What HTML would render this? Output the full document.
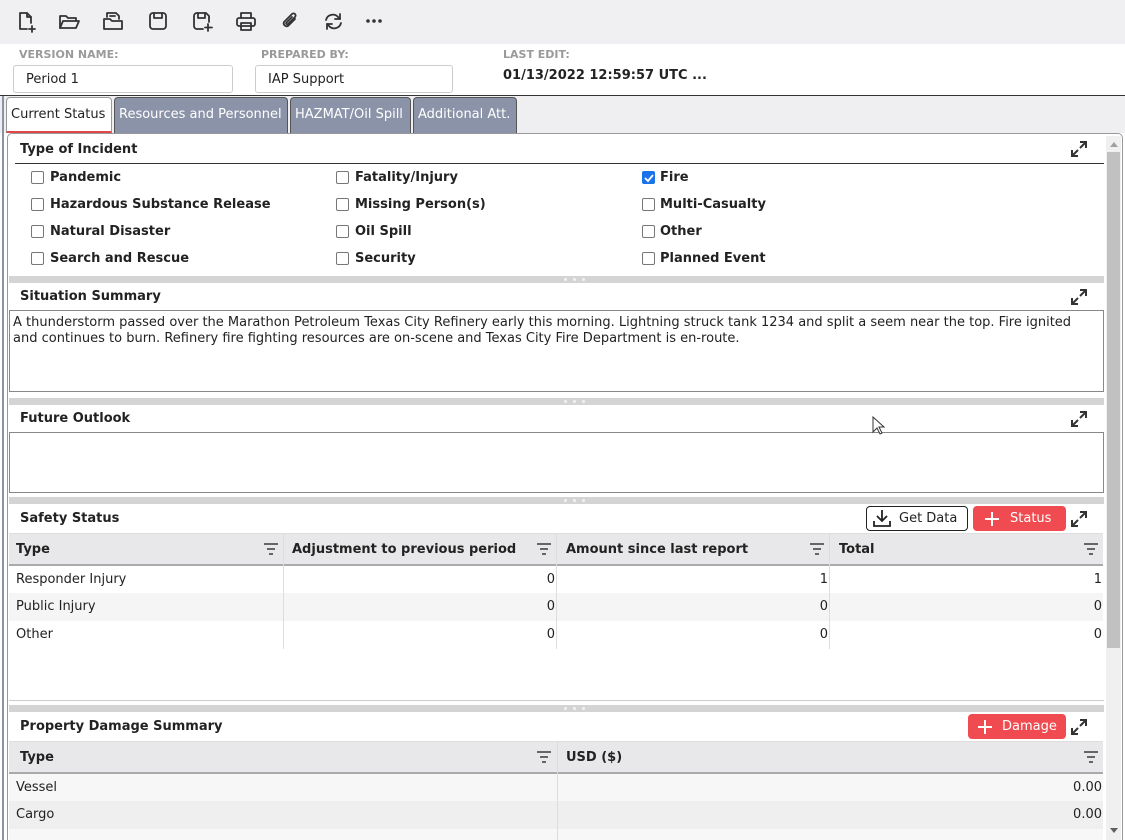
<!DOCTYPE html>
<html><head><meta charset="utf-8">
<style>
*{box-sizing:border-box;margin:0;padding:0}
html,body{width:1125px;height:840px;overflow:hidden}
body{background:#fff;font-family:"DejaVu Sans","Liberation Sans",sans-serif;font-size:13px;color:#222;position:relative}
.a{position:absolute}
.b{font-weight:bold}
.tb{left:0;top:0;width:1125px;height:44px;background:#f0f0f2}
.lbl{font-size:11px;font-weight:bold;color:#9a9a9a;top:48px}
.inp{top:65px;height:28px;border:1px solid #ccc;border-radius:3px;padding:6px 0 0 12px;font-size:13px}
.tab{top:97px;height:36px;background:#8b93a8;color:#fff;border:1px solid #555;border-bottom:none;border-radius:4px 4px 0 0;padding:9px 0 0 4px;font-size:13px;white-space:nowrap}
.sep{left:9px;width:1095px;height:7px;background:#d4d4d4}
.sep i{position:absolute;left:555px;top:2px;width:3px;height:3px;border-radius:50%;background:#f2f2f2}
.ttl{left:20px;font-weight:bold;font-size:13px}
.cb{width:13px;height:13px;border:1px solid #777;border-radius:2px;background:#fff}
.cl{font-weight:bold;font-size:13px}
.ta{left:9px;width:1095px;border:1px solid #888;background:#fff;padding:4px 3px;font-size:13px;line-height:16px;white-space:nowrap}
.th{height:33px;background:#e8e8ea;border-bottom:2px solid #aaa}
.tc{font-weight:bold;padding-top:9px}
.row{left:9px;width:1094px;height:28px}
.cell{font-size:13px}
.r{text-align:right;width:60px}
.btnr{background:#f04b50;color:#fff;border-radius:4px;height:25px;font-size:13px}
.flt{width:14px;height:12px}
</style></head><body>
<div class="a tb"></div>
<svg class="a" style="left:12px;top:8px" width="380" height="26" fill="none" stroke="#333" stroke-width="1.8" stroke-linecap="round" stroke-linejoin="round">
 <g transform="translate(5,4)"><path d="M10 17H3V1h7l4 4v6"/><path d="M10 1v4h4"/><path d="M15 14v6M12 17h6"/></g>
 <g transform="translate(47,5)"><path d="M1 15V3h6l2 2h8v3"/><path d="M1 15l3-7h16l-3 7z"/></g>
 <g transform="translate(91,3)"><path d="M4 6V2h9l3 3v3"/><path d="M1 18V8h6l2 2h10v8z"/><path d="M7 5h5"/></g>
 <g transform="translate(137,4)"><rect x="1" y="1" width="16" height="16" rx="3"/><path d="M5 1v5h8V1"/></g>
 <g transform="translate(181,4)"><path d="M10 17H4a3 3 0 0 1-3-3V4a3 3 0 0 1 3-3h9l3 3v6"/><path d="M5 1v5h7V1"/><path d="M15 12v7M12 15.5h7"/></g>
 <g transform="translate(224,4)"><path d="M5 6V1h10v5"/><rect x="1" y="6" width="18" height="8" rx="2"/><path d="M5 11h10v7H5z"/></g>
 <g transform="translate(268,3)"><path d="M15 8l-7 7a3 3 0 0 1-4-4l8-8a2 2 0 0 1 3 3l-7 7a1 1 0 0 1-1.5-1.5L12 6"/></g>
 <g transform="translate(311,4)"><path d="M3 8a7 7 0 0 1 12-3l2 2"/><path d="M17 2v5h-5"/><path d="M18 11a7 7 0 0 1-12 3l-2-2"/><path d="M4 17v-5h5"/></g>
 <g fill="#333" stroke="none"><circle cx="356" cy="13" r="1.8"/><circle cx="362" cy="13" r="1.8"/><circle cx="368" cy="13" r="1.8"/></g>
</svg>
<div class="a lbl" style="left:19px">VERSION NAME:</div>
<div class="a lbl" style="left:261px">PREPARED BY:</div>
<div class="a lbl" style="left:503px">LAST EDIT:</div>
<div class="a inp" style="left:13px;width:220px">Period 1</div>
<div class="a inp" style="left:255px;width:198px">IAP Support</div>
<div class="a b" style="left:503px;top:68px">01/13/2022 12:59:57 UTC ...</div>
<div class="a" style="left:0;top:95px;width:1125px;height:1px;background:#333"></div>
<div class="a" style="left:0;top:96px;width:1125px;height:37px;background:#efeff1"></div>
<div class="a" style="left:2px;top:96px;width:2px;height:744px;background:#8b93a8"></div>
<div class="a tab" style="left:6px;width:106px;background:#fff;color:#222;border-color:#999;border-bottom:2px solid #e04848">Current Status</div>
<div class="a tab" style="left:114px;width:174px">Resources and Personnel</div>
<div class="a tab" style="left:290px;width:121px">HAZMAT/Oil Spill</div>
<div class="a tab" style="left:413px;width:104px">Additional Att.</div>
<div class="a" style="left:7px;top:133px;width:1116px;height:707px;border:1px solid #999;border-bottom:none;border-radius:5px 5px 0 0;background:#fff"></div>
<div class="a" style="left:1106px;top:136px;width:15px;height:704px;background:#f0f0f0"></div>
<div class="a" style="left:1107px;top:152px;width:13px;height:496px;background:#c1c1c1"></div>
<div class="a" style="left:1110px;top:142px;width:0;height:0;border:4px solid transparent;border-bottom:5px solid #a0a0a0;border-top:none"></div>
<div class="a" style="left:1110px;top:828px;width:0;height:0;border:4px solid transparent;border-top:5px solid #606060;border-bottom:none"></div>

<svg width="0" height="0" style="position:absolute"><defs><g id="ex" fill="none" stroke="#333" stroke-width="2"><path d="M10 2h6v6M16 2l-6 6M8 16H2v-6M2 16l6-6"/></g>
<g id="fl" fill="none" stroke="#666" stroke-width="2"><path d="M0 1h14M3 6h8M5 11h4"/></g></defs></svg>

<div class="a ttl" style="top:142px">Type of Incident</div>
<svg class="a" style="left:1070px;top:140px" width="18" height="18"><use href="#ex"/></svg>
<div class="a" style="left:15px;top:163px;width:1089px;height:1px;background:#333"></div>
<div class="a cb" style="left:31px;top:171px"></div><div class="a cl" style="left:50px;top:170px">Pandemic</div>
<div class="a cb" style="left:31px;top:198px"></div><div class="a cl" style="left:50px;top:197px">Hazardous Substance Release</div>
<div class="a cb" style="left:31px;top:225px"></div><div class="a cl" style="left:50px;top:224px">Natural Disaster</div>
<div class="a cb" style="left:31px;top:252px"></div><div class="a cl" style="left:50px;top:251px">Search and Rescue</div>
<div class="a cb" style="left:336px;top:171px"></div><div class="a cl" style="left:355px;top:170px">Fatality/Injury</div>
<div class="a cb" style="left:336px;top:198px"></div><div class="a cl" style="left:355px;top:197px">Missing Person(s)</div>
<div class="a cb" style="left:336px;top:225px"></div><div class="a cl" style="left:355px;top:224px">Oil Spill</div>
<div class="a cb" style="left:336px;top:252px"></div><div class="a cl" style="left:355px;top:251px">Security</div>
<div class="a cb" style="left:642px;top:171px;background:#1a73e8;border-color:#1a73e8"><svg width="11" height="11" style="position:absolute;left:0;top:0"><path d="M2 6l3 3 5-6" fill="none" stroke="#fff" stroke-width="1.8"/></svg></div><div class="a cl" style="left:660px;top:170px">Fire</div>
<div class="a cb" style="left:642px;top:198px"></div><div class="a cl" style="left:660px;top:197px">Multi-Casualty</div>
<div class="a cb" style="left:642px;top:225px"></div><div class="a cl" style="left:660px;top:224px">Other</div>
<div class="a cb" style="left:642px;top:252px"></div><div class="a cl" style="left:660px;top:251px">Planned Event</div>

<div class="a sep" style="top:276px"><i></i><i style="left:564px"></i><i style="left:573px"></i></div>
<div class="a ttl" style="top:289px">Situation Summary</div>
<svg class="a" style="left:1070px;top:288px" width="18" height="18"><use href="#ex"/></svg>
<div class="a ta" style="top:310px;height:82px">A thunderstorm passed over the Marathon Petroleum Texas City Refinery early this morning. Lightning struck tank 1234 and split a seem near the top. Fire ignited<br>and continues to burn. Refinery fire fighting resources are on-scene and Texas City Fire Department is en-route.</div>

<div class="a sep" style="top:398px"><i></i><i style="left:564px"></i><i style="left:573px"></i></div>
<div class="a ttl" style="top:411px">Future Outlook</div>
<svg class="a" style="left:1070px;top:410px" width="18" height="18"><use href="#ex"/></svg>
<div class="a ta" style="top:432px;height:61px"></div>

<div class="a sep" style="top:497px"><i></i><i style="left:564px"></i><i style="left:573px"></i></div>
<div class="a ttl" style="top:511px">Safety Status</div>
<div class="a" style="left:866px;top:506px;width:102px;height:25px;border:1px solid #222;border-radius:4px;background:#fff"></div>
<svg class="a" style="left:873px;top:509px" width="18" height="18" fill="none" stroke="#222" stroke-width="1.8"><path d="M9 1v11M4 7l5 5 5-5M1 12v5h16v-5"/></svg>
<div class="a" style="left:899px;top:511px">Get Data</div>
<div class="a btnr" style="left:973px;top:506px;width:93px"></div>
<svg class="a" style="left:984px;top:511px" width="16" height="16" stroke="#fff" stroke-width="2"><path d="M8 1v14M1 8h14"/></svg>
<div class="a" style="left:1010px;top:511px;color:#fff">Status</div>
<svg class="a" style="left:1070px;top:510px" width="18" height="18"><use href="#ex"/></svg>

<div class="a th" style="left:9px;top:533px;width:1094px;border-top:1px solid #ddd"></div>
<div class="a tc" style="left:16px;top:533px">Type</div>
<div class="a tc" style="left:292px;top:533px">Adjustment to previous period</div>
<div class="a tc" style="left:566px;top:533px">Amount since last report</div>
<div class="a tc" style="left:839px;top:533px">Total</div>
<svg class="a flt" style="left:264px;top:543px"><use href="#fl"/></svg>
<svg class="a flt" style="left:537px;top:543px"><use href="#fl"/></svg>
<svg class="a flt" style="left:810px;top:543px"><use href="#fl"/></svg>
<svg class="a flt" style="left:1084px;top:543px"><use href="#fl"/></svg>
<div class="a row" style="top:566px;background:#fff"></div>
<div class="a row" style="top:593px;background:#f5f5f6"></div>
<div class="a row" style="top:621px;background:#fff"></div>
<div class="a" style="left:283px;top:533px;width:1px;height:116px;background:#ddd"></div>
<div class="a" style="left:556px;top:533px;width:1px;height:116px;background:#ddd"></div>
<div class="a" style="left:829px;top:533px;width:1px;height:116px;background:#ddd"></div>
<div class="a cell" style="left:16px;top:572px">Responder Injury</div>
<div class="a cell" style="left:16px;top:599px">Public Injury</div>
<div class="a cell" style="left:16px;top:627px">Other</div>
<div class="a cell r" style="left:495px;top:572px">0</div><div class="a cell r" style="left:768px;top:572px">1</div><div class="a cell r" style="left:1042px;top:572px">1</div>
<div class="a cell r" style="left:495px;top:599px">0</div><div class="a cell r" style="left:768px;top:599px">0</div><div class="a cell r" style="left:1042px;top:599px">0</div>
<div class="a cell r" style="left:495px;top:627px">0</div><div class="a cell r" style="left:768px;top:627px">0</div><div class="a cell r" style="left:1042px;top:627px">0</div>
<div class="a" style="left:9px;top:700px;width:1095px;height:1px;background:#ccc"></div>

<div class="a sep" style="top:705px"><i></i><i style="left:564px"></i><i style="left:573px"></i></div>
<div class="a ttl" style="top:719px">Property Damage Summary</div>
<div class="a btnr" style="left:968px;top:714px;width:98px"></div>
<svg class="a" style="left:977px;top:719px" width="16" height="16" stroke="#fff" stroke-width="2"><path d="M8 1v14M1 8h14"/></svg>
<div class="a" style="left:1002px;top:719px;color:#fff">Damage</div>
<svg class="a" style="left:1070px;top:718px" width="18" height="18"><use href="#ex"/></svg>
<div class="a th" style="left:9px;top:741px;width:1094px;border-top:1px solid #ddd"></div>
<div class="a tc" style="left:20px;top:741px">Type</div>
<div class="a tc" style="left:566px;top:741px">USD ($)</div>
<svg class="a flt" style="left:537px;top:751px"><use href="#fl"/></svg>
<svg class="a flt" style="left:1084px;top:751px"><use href="#fl"/></svg>
<div class="a row" style="top:774px;background:#f7f7f7"></div>
<div class="a row" style="top:801px;background:#efeff0"></div>
<div class="a row" style="top:829px;height:11px;background:#f7f7f7"></div>
<div class="a" style="left:557px;top:741px;width:1px;height:99px;background:#ddd"></div>
<div class="a cell" style="left:16px;top:780px">Vessel</div>
<div class="a cell" style="left:16px;top:807px">Cargo</div>
<div class="a cell r" style="left:1042px;top:780px">0.00</div>
<div class="a cell r" style="left:1042px;top:807px">0.00</div>
<svg class="a" style="left:872px;top:416px" width="14" height="20"><path d="M1 1v15l4-4 3 6 2-1-3-6h5z" fill="#fff" stroke="#333"/></svg>
</body></html>
